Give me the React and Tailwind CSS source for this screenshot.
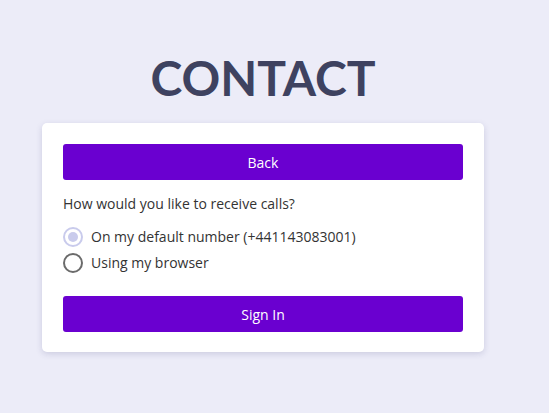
import { useState } from "react";

function Radio({ checked, disabled }) {
  if (disabled) {
    return (
      <span className="flex h-[20px] w-[20px] items-center justify-center rounded-full border-2 border-[#c9cbec]">
        {checked && <span className="h-[10px] w-[10px] rounded-full bg-[#c9cbec]" />}
      </span>
    );
  }
  return (
    <span className="flex h-[20px] w-[20px] items-center justify-center rounded-full border-2 border-[#6b6b6b]">
      {checked && <span className="h-[10px] w-[10px] rounded-full bg-[#6a00d0]" />}
    </span>
  );
}

export default function App() {
  const [mode, setMode] = useState("default");

  return (
    <div className="min-h-[413px] w-full bg-[#ececf8] font-['Open_Sans',sans-serif]">
      <div className="w-[442px] ml-[42px]">
        <h1 className="pt-[45px] pb-[13px] text-center font-['Lato',sans-serif] text-[48px] font-bold leading-[65px] text-[#3e4260]">
          CONTACT
        </h1>
        <div className="rounded-[5px] bg-white px-[21px] pt-[21px] pb-[20px] shadow-[0_2px_6px_rgba(60,60,120,0.18)]">
          <button className="h-[36px] w-full rounded-[3px] bg-[#6a00d0] text-[14px] text-white">
            Back
          </button>
          <p className="mt-[14px] text-[14px] leading-[20px] text-[#333]">
            How would you like to receive calls?
          </p>
          <div className="mt-[13px] flex flex-col gap-[6px]">
            <label className="flex items-center gap-[8px] text-[14px] leading-[20px] text-[#333]">
              <Radio checked disabled />
              <span>On my default number (+441143083001)</span>
            </label>
            <label
              className="flex items-center gap-[8px] text-[14px] leading-[20px] text-[#333]"
              onClick={() => setMode("browser")}
            >
              <Radio checked={mode === "browser"} />
              <span>Using my browser</span>
            </label>
          </div>
          <button className="mt-[23px] h-[36px] w-full rounded-[3px] bg-[#6a00d0] text-[14px] text-white">
            Sign In
          </button>
        </div>
      </div>
    </div>
  );
}
